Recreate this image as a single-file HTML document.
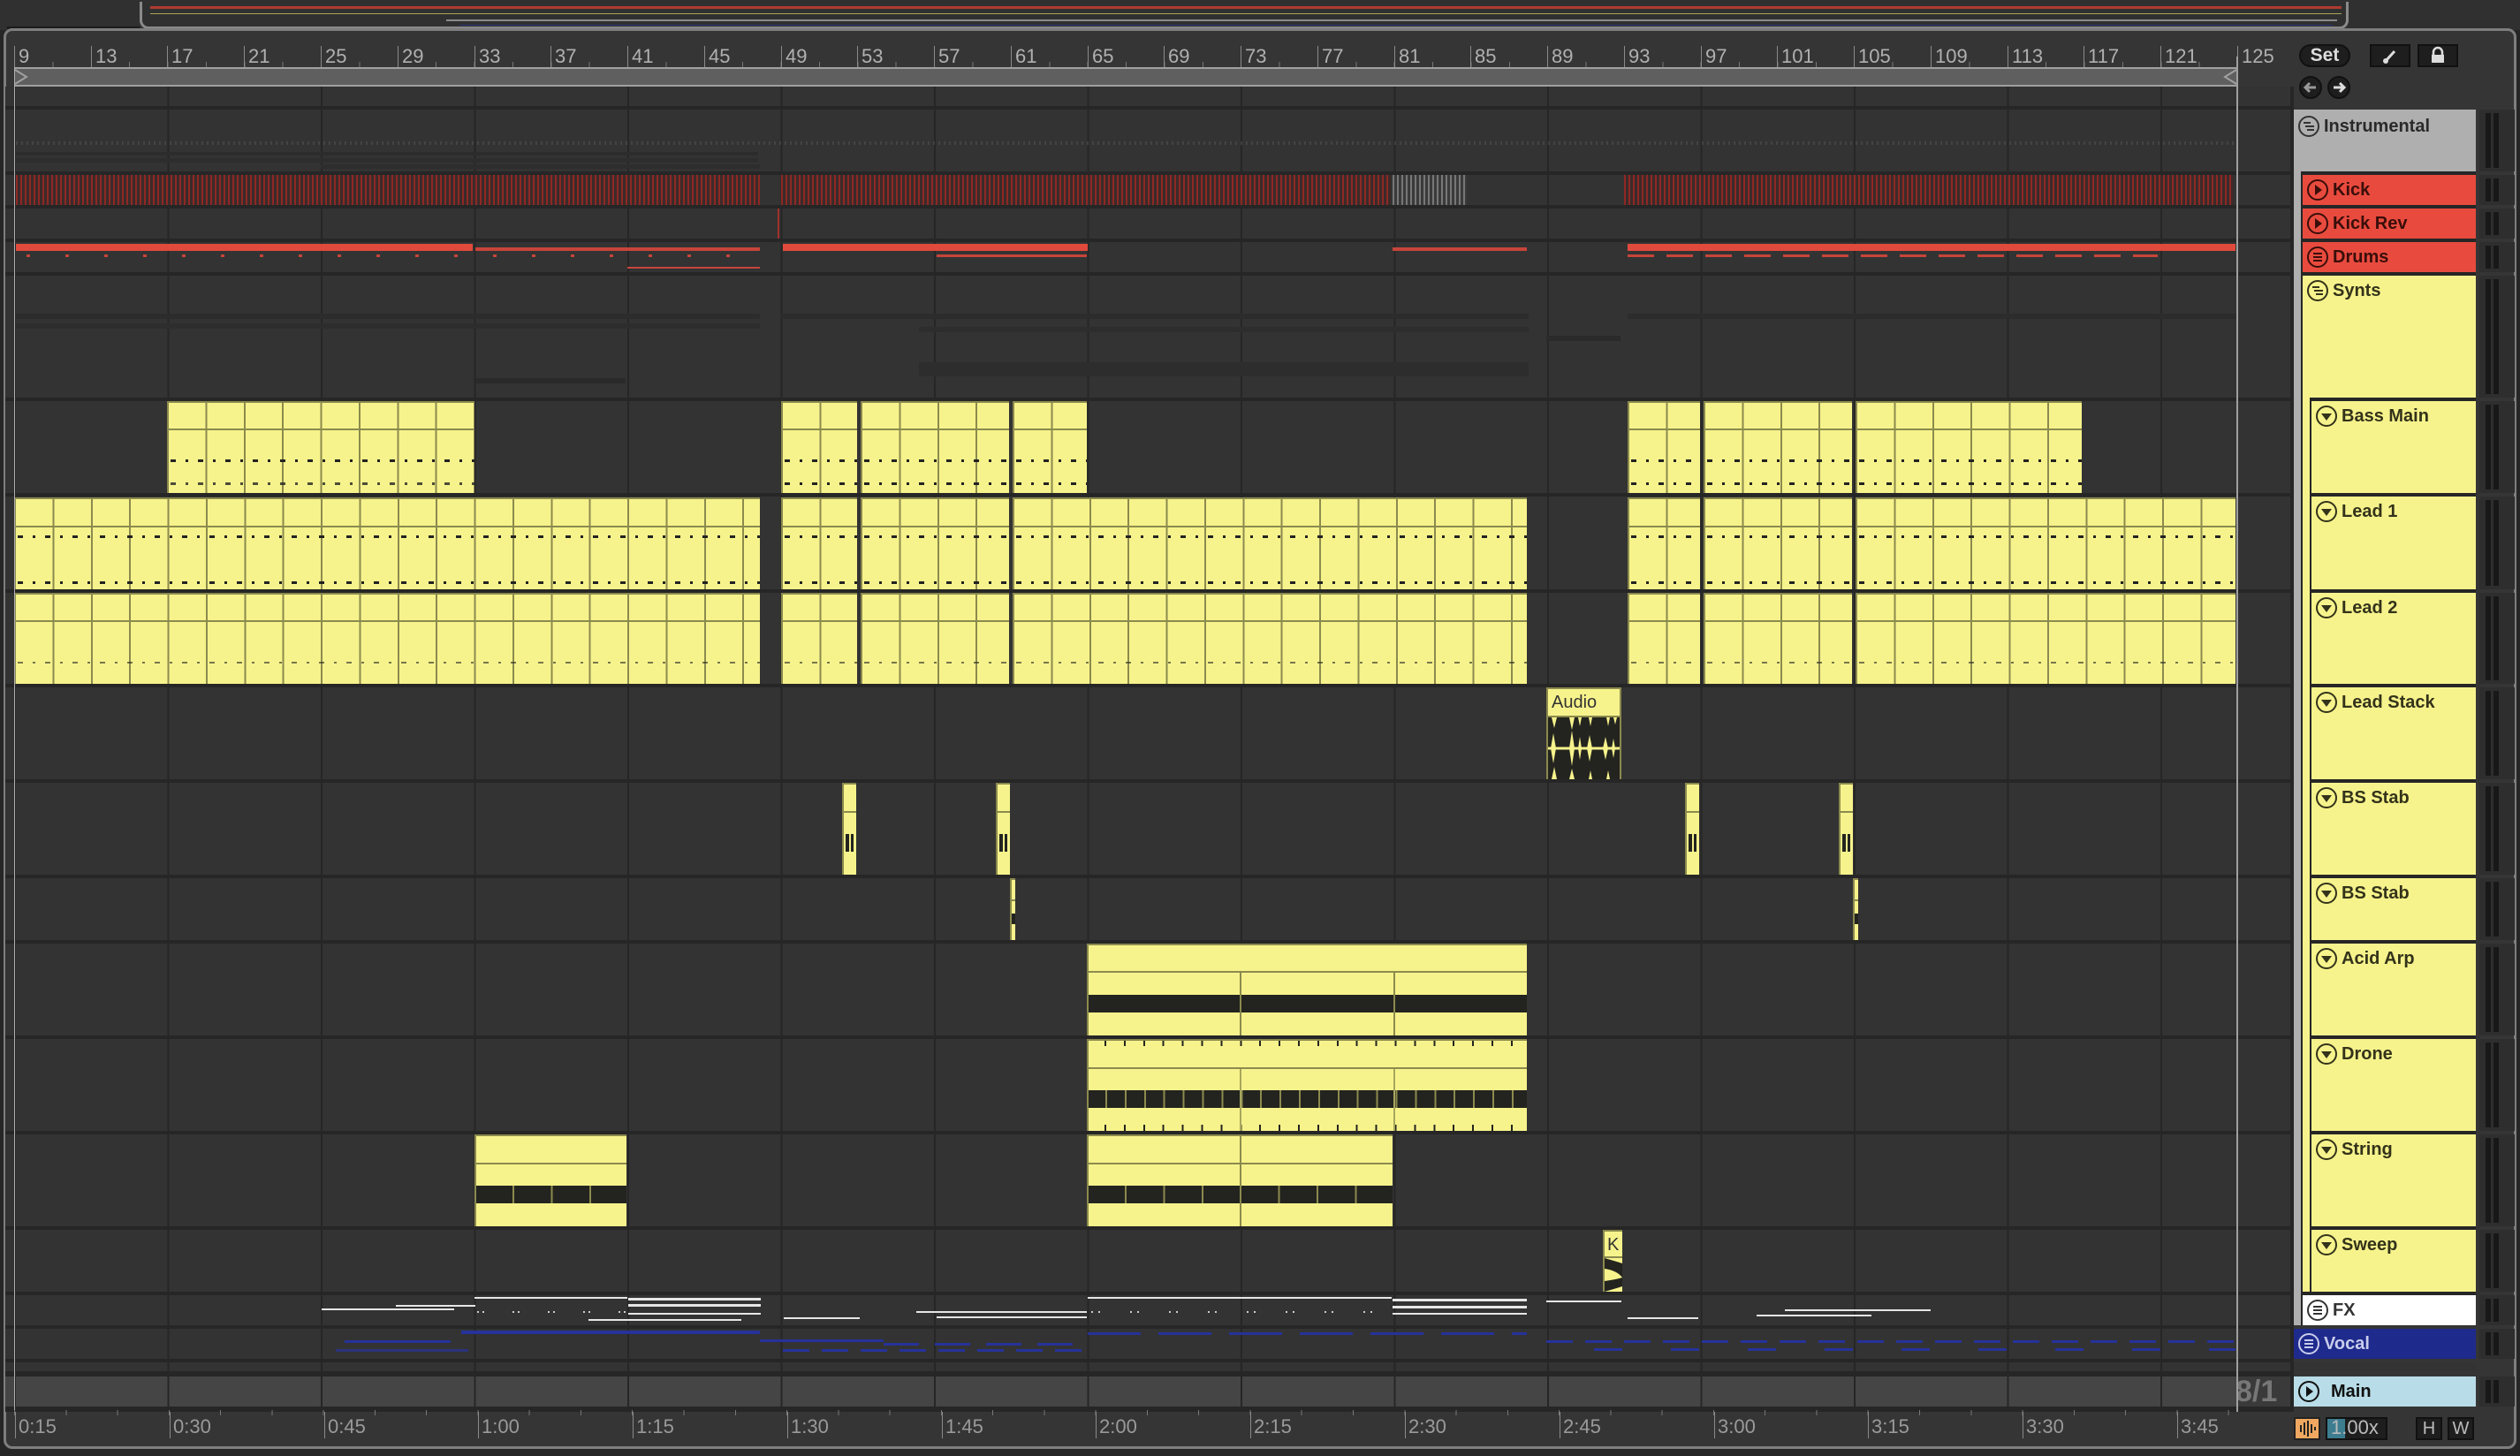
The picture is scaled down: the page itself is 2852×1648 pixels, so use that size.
<!DOCTYPE html>
<html><head><meta charset="utf-8"><style>
*{margin:0;padding:0;box-sizing:border-box}
body{width:2852px;height:1648px;background:#262626;position:relative;overflow:hidden;font-family:"Liberation Sans",sans-serif}
div{position:absolute}
.row{left:6px;width:2586px;background-color:#333;background-image:repeating-linear-gradient(90deg,#262626 0 2px,transparent 2px 173.5px);background-position:10px 0}
.c{background:#f7f38c;box-shadow:inset 2px 0 #8b8a4e,inset 0 2px #8b8a4e}
.vl{background-image:repeating-linear-gradient(90deg,#8b8a4e 0 2px,transparent 2px 43.38px)}
.hl{left:0;right:0;height:2px;background:#8b8a4e}
.db{left:2px;right:0;background:#23241f}
.dots{left:4px;right:0;height:3px;background-image:repeating-linear-gradient(90deg,#222 0 6px,transparent 6px 17px,#222 17px 20px,transparent 20px 31px)}
.rn{top:52px;font:22px "Liberation Sans Narrow","Liberation Sans",sans-serif;color:#b0b0b0;border-left:1px solid #8a8a8a;padding-left:4px;height:24px;line-height:24px}
.tl{top:1598px;font:22px "Liberation Sans Narrow","Liberation Sans",sans-serif;color:#9a9a9a;border-left:1px solid #8a8a8a;padding-left:3px;height:30px;line-height:34px}
.th{font:bold 20px "Liberation Sans",sans-serif;color:#222;}
.th svg{position:absolute;left:4px;top:6px}
.th span{position:absolute;left:34px;top:8px;white-space:nowrap}
.m{left:2806px;width:40px;background:#2e2e2e}
.m:before,.m:after{content:"";position:absolute;top:4px;bottom:4px;width:6px;background:#181818}
.m:before{left:7px}.m:after{left:16px}
.wl{height:2px;background:#e6e6e6}
.bl{height:3px;background:#26329a}
.btn{background:#1e1e1e;border:2px solid #111}
</style></head><body>

<div style="left:0;top:0;width:2852px;height:34px;background:#303030"></div>
<div style="left:158px;top:2px;width:2500px;height:31px;border:3px solid #8a8a8a;border-top:none;border-radius:0 0 10px 10px"></div>
<div style="left:170px;top:7px;width:2480px;height:3px;background:#b03a32"></div>
<div style="left:170px;top:15px;width:2480px;height:1px;background:#a8a45a"></div>
<div style="left:505px;top:22px;width:2140px;height:2px;background:#8c8c8c"></div>
<div style="left:520px;top:28px;width:2120px;height:1px;background:#2b3378"></div>
<div style="left:8px;top:30px;width:150px;height:3px;background:#1c1c1c"></div>

<div style="left:4px;top:32px;width:2844px;height:1608px;background:#353535;border:3px solid #7e7e7e;border-radius:10px"></div>

<div style="left:16px;top:70px;width:2516px;height:6px;background-image:repeating-linear-gradient(90deg,#777 0 1px,transparent 1px 43.38px)"></div>
<div class="rn" style="left:16px">9</div>
<div class="rn" style="left:103px">13</div>
<div class="rn" style="left:189px">17</div>
<div class="rn" style="left:276px">21</div>
<div class="rn" style="left:363px">25</div>
<div class="rn" style="left:450px">29</div>
<div class="rn" style="left:537px">33</div>
<div class="rn" style="left:623px">37</div>
<div class="rn" style="left:710px">41</div>
<div class="rn" style="left:797px">45</div>
<div class="rn" style="left:884px">49</div>
<div class="rn" style="left:970px">53</div>
<div class="rn" style="left:1057px">57</div>
<div class="rn" style="left:1144px">61</div>
<div class="rn" style="left:1231px">65</div>
<div class="rn" style="left:1317px">69</div>
<div class="rn" style="left:1404px">73</div>
<div class="rn" style="left:1491px">77</div>
<div class="rn" style="left:1578px">81</div>
<div class="rn" style="left:1664px">85</div>
<div class="rn" style="left:1751px">89</div>
<div class="rn" style="left:1838px">93</div>
<div class="rn" style="left:1925px">97</div>
<div class="rn" style="left:2011px">101</div>
<div class="rn" style="left:2098px">105</div>
<div class="rn" style="left:2185px">109</div>
<div class="rn" style="left:2272px">113</div>
<div class="rn" style="left:2358px">117</div>
<div class="rn" style="left:2445px">121</div>
<div class="rn" style="left:2532px">125</div>
<div style="left:16px;top:76px;width:2516px;height:22px;background:#5f5f5f;border-top:2px solid #a0a0a0;border-bottom:2px solid #a0a0a0"></div>
<svg style="position:absolute;left:16px;top:78px" width="20" height="18"><path d="M1 1 L14 9 L1 17" fill="none" stroke="#a0a0a0" stroke-width="2"/></svg>
<svg style="position:absolute;left:2512px;top:78px" width="20" height="18"><path d="M19 1 L6 9 L19 17" fill="none" stroke="#a0a0a0" stroke-width="2"/></svg>

<div style="left:6px;top:98px;width:2590px;height:1500px;background:#262626"></div>
<div class="row" style="top:98px;height:22px"></div>
<div class="row" style="top:124px;height:70px"></div>
<div class="row" style="top:198px;height:34px"></div>
<div class="row" style="top:236px;height:34px"></div>
<div class="row" style="top:274px;height:34px"></div>
<div class="row" style="top:312px;height:138px"></div>
<div class="row" style="top:454px;height:104px"></div>
<div class="row" style="top:562px;height:105px"></div>
<div class="row" style="top:671px;height:103px"></div>
<div class="row" style="top:778px;height:104px"></div>
<div class="row" style="top:886px;height:104px"></div>
<div class="row" style="top:994px;height:70px"></div>
<div class="row" style="top:1068px;height:104px"></div>
<div class="row" style="top:1176px;height:104px"></div>
<div class="row" style="top:1284px;height:104px"></div>
<div class="row" style="top:1392px;height:70px"></div>
<div class="row" style="top:1466px;height:34px"></div>
<div class="row" style="top:1504px;height:34px"></div>
<div class="row" style="top:1542px;height:10px"></div>
<div class="row" style="top:1558px;height:34px;background-color:#454545"></div>
<div style="left:2532px;top:1558px;width:60px;height:34px;background:#3a3a3a"></div>
<div style="left:2530px;top:1556px;font:bold 34px 'Liberation Sans',sans-serif;color:#777">8/1</div>

<div style="left:18px;top:160px;width:2510px;height:4px;background-image:repeating-linear-gradient(90deg,#555 0 2px,transparent 2px 6px);opacity:.5"></div>
<div style="left:18px;top:172px;width:840px;height:4px;background:#2c2c2c"></div>
<div style="left:18px;top:179px;width:840px;height:5px;background:#2d2d2d"></div>
<div style="left:363px;top:186px;width:497px;height:5px;background:#2d2d2d"></div>

<div style="left:18px;top:198px;width:842px;height:34px;background:repeating-linear-gradient(90deg,#8e2824 0 2px,#3b2b2a 2px 5px)"></div>
<div style="left:884px;top:198px;width:690px;height:34px;background:repeating-linear-gradient(90deg,#8e2824 0 2px,#3b2b2a 2px 5px)"></div>
<div style="left:1576px;top:198px;width:84px;height:34px;background:repeating-linear-gradient(90deg,#777 0 2px,#3a3a3a 2px 5px)"></div>
<div style="left:1838px;top:198px;width:690px;height:34px;background:repeating-linear-gradient(90deg,#8e2824 0 2px,#3b2b2a 2px 5px)"></div>
<div style="left:880px;top:236px;width:2px;height:34px;background:#a0302a"></div>

<div style="left:18px;top:276px;width:517px;height:8px;background:#e04a3c"></div>
<div style="left:538px;top:280px;width:322px;height:4px;background:#c8443a"></div>
<div style="left:710px;top:302px;width:150px;height:2px;background:#c8443a"></div>
<div style="left:886px;top:276px;width:345px;height:8px;background:#e04a3c"></div>
<div style="left:1060px;top:288px;width:170px;height:3px;background:#c8443a"></div>
<div style="left:1576px;top:280px;width:152px;height:4px;background:#c8443a"></div>
<div style="left:1842px;top:276px;width:688px;height:8px;background:#e04a3c"></div>
<div style="left:1842px;top:288px;width:600px;height:3px;background-image:repeating-linear-gradient(90deg,#c8443a 0 30px,transparent 30px 44px)"></div>
<div style="left:30px;top:288px;width:830px;height:3px;background-image:repeating-linear-gradient(90deg,#c8443a 0 4px,transparent 4px 44px)"></div>

<div style="left:18px;top:355px;width:842px;height:6px;background:#2c2c2c"></div>
<div style="left:18px;top:366px;width:842px;height:6px;background:#2d2d2d"></div>
<div style="left:884px;top:355px;width:846px;height:6px;background:#2c2c2c"></div>
<div style="left:1040px;top:370px;width:690px;height:6px;background:#2d2d2d"></div>
<div style="left:1040px;top:410px;width:690px;height:16px;background:#2d2d2d"></div>
<div style="left:538px;top:428px;width:170px;height:6px;background:#2a2a2a"></div>
<div style="left:1750px;top:380px;width:84px;height:6px;background:#2a2a2a"></div>
<div style="left:1842px;top:355px;width:690px;height:6px;background:#2c2c2c"></div>

<div class="c vl" style="left:189px;top:454px;width:348px;height:104px"><div class="hl" style="top:31px"></div><div class="dots" style="top:66px"></div><div class="dots" style="top:92px;opacity:.8"></div></div>
<div class="c vl" style="left:884px;top:454px;width:86px;height:104px"><div class="hl" style="top:31px"></div><div class="dots" style="top:66px"></div><div class="dots" style="top:92px"></div></div>
<div class="c vl" style="left:974px;top:454px;width:168px;height:104px"><div class="hl" style="top:31px"></div><div class="dots" style="top:66px"></div><div class="dots" style="top:92px"></div></div>
<div class="c vl" style="left:1146px;top:454px;width:84px;height:104px"><div class="hl" style="top:31px"></div><div class="dots" style="top:66px"></div><div class="dots" style="top:92px"></div></div>
<div class="c vl" style="left:1842px;top:454px;width:82px;height:104px"><div class="hl" style="top:31px"></div><div class="dots" style="top:66px"></div><div class="dots" style="top:92px"></div></div>
<div class="c vl" style="left:1928px;top:454px;width:168px;height:104px"><div class="hl" style="top:31px"></div><div class="dots" style="top:66px"></div><div class="dots" style="top:92px"></div></div>
<div class="c vl" style="left:2100px;top:454px;width:256px;height:104px"><div class="hl" style="top:31px"></div><div class="dots" style="top:66px"></div><div class="dots" style="top:92px"></div></div>

<div class="c vl" style="left:16px;top:563px;width:844px;height:104px"><div class="hl" style="top:32px"></div><div class="dots" style="top:43px"></div><div class="dots" style="top:95px"></div></div>
<div class="c vl" style="left:884px;top:563px;width:86px;height:104px"><div class="hl" style="top:32px"></div><div class="dots" style="top:43px"></div><div class="dots" style="top:95px"></div></div>
<div class="c vl" style="left:974px;top:563px;width:168px;height:104px"><div class="hl" style="top:32px"></div><div class="dots" style="top:43px"></div><div class="dots" style="top:95px"></div></div>
<div class="c vl" style="left:1146px;top:563px;width:582px;height:104px"><div class="hl" style="top:32px"></div><div class="dots" style="top:43px"></div><div class="dots" style="top:95px"></div></div>
<div class="c vl" style="left:1842px;top:563px;width:82px;height:104px"><div class="hl" style="top:32px"></div><div class="dots" style="top:43px"></div><div class="dots" style="top:95px"></div></div>
<div class="c vl" style="left:1928px;top:563px;width:168px;height:104px"><div class="hl" style="top:32px"></div><div class="dots" style="top:43px"></div><div class="dots" style="top:95px"></div></div>
<div class="c vl" style="left:2100px;top:563px;width:430px;height:104px"><div class="hl" style="top:32px"></div><div class="dots" style="top:43px"></div><div class="dots" style="top:95px"></div></div>

<div class="c vl" style="left:16px;top:671px;width:844px;height:103px"><div class="hl" style="top:31px"></div><div class="dots" style="top:78px;height:2px;opacity:.6"></div></div>
<div class="c vl" style="left:884px;top:671px;width:86px;height:103px"><div class="hl" style="top:31px"></div><div class="dots" style="top:78px;height:2px;opacity:.6"></div></div>
<div class="c vl" style="left:974px;top:671px;width:168px;height:103px"><div class="hl" style="top:31px"></div><div class="dots" style="top:78px;height:2px;opacity:.6"></div></div>
<div class="c vl" style="left:1146px;top:671px;width:582px;height:103px"><div class="hl" style="top:31px"></div><div class="dots" style="top:78px;height:2px;opacity:.6"></div></div>
<div class="c vl" style="left:1842px;top:671px;width:82px;height:103px"><div class="hl" style="top:31px"></div><div class="dots" style="top:78px;height:2px;opacity:.6"></div></div>
<div class="c vl" style="left:1928px;top:671px;width:168px;height:103px"><div class="hl" style="top:31px"></div><div class="dots" style="top:78px;height:2px;opacity:.6"></div></div>
<div class="c vl" style="left:2100px;top:671px;width:430px;height:103px"><div class="hl" style="top:31px"></div><div class="dots" style="top:78px;height:2px;opacity:.6"></div></div>

<div class="c" style="left:1750px;top:778px;width:85px;height:104px;background:#23241f;box-shadow:inset 2px 0 #8b8a4e,inset -2px 0 #8b8a4e">
 <div style="left:0;top:0;width:85px;height:34px;background:#f7f38c;border:2px solid #8b8a4e;font:20px 'Liberation Sans',sans-serif;color:#333;padding:4px 0 0 4px">Audio</div>
 <svg style="position:absolute;left:2px;top:34px" width="81" height="70"><path d="M0 35 H81" stroke="#f7f38c" stroke-width="3"/><path d="M4 0 L7 12 L10 0 Z M24 0 L27 14 L30 0 Z M34 0 L36 10 L38 0Z M46 0 L48 10 L50 0Z M66 0 L68 10 L70 0Z M74 0 L76 8 L78 0Z M3 35 L6 18 L9 35 L6 52Z M24 35 L27 15 L30 35 L27 55Z M34 35 L36 22 L38 35 L36 48Z M44 35 L47 20 L50 35 L47 50Z M62 35 L65 22 L68 35 L65 48Z M72 35 L74 24 L76 35 L74 46Z M4 70 L7 56 L10 70Z M24 70 L27 58 L30 70Z M46 70 L48 60 L50 70Z M66 70 L68 60 L70 70Z" fill="#f7f38c"/></svg>
</div>

<div class="c" style="left:953px;top:886px;width:16px;height:104px"><div class="hl" style="top:32px"></div><div style="left:4px;top:58px;width:4px;height:20px;background:#23241f"></div><div style="left:10px;top:58px;width:3px;height:20px;background:#23241f"></div></div>
<div class="c" style="left:1127px;top:886px;width:16px;height:104px"><div class="hl" style="top:32px"></div><div style="left:4px;top:58px;width:4px;height:20px;background:#23241f"></div><div style="left:10px;top:58px;width:3px;height:20px;background:#23241f"></div></div>
<div class="c" style="left:1907px;top:886px;width:16px;height:104px"><div class="hl" style="top:32px"></div><div style="left:4px;top:58px;width:4px;height:20px;background:#23241f"></div><div style="left:10px;top:58px;width:3px;height:20px;background:#23241f"></div></div>
<div class="c" style="left:2081px;top:886px;width:16px;height:104px"><div class="hl" style="top:32px"></div><div style="left:4px;top:58px;width:4px;height:20px;background:#23241f"></div><div style="left:10px;top:58px;width:3px;height:20px;background:#23241f"></div></div>
<div class="c" style="left:1143px;top:994px;width:6px;height:70px"><div class="hl" style="top:24px"></div><div style="left:2px;top:40px;width:4px;height:12px;background:#23241f"></div></div>
<div class="c" style="left:2097px;top:994px;width:6px;height:70px"><div class="hl" style="top:24px"></div><div style="left:2px;top:40px;width:4px;height:12px;background:#23241f"></div></div>

<div class="c" style="left:1230px;top:1068px;width:498px;height:104px"><div class="hl" style="top:31px"></div><div class="db" style="top:58px;height:20px"></div><div style="left:173px;top:33px;width:2px;height:71px;background:#8b8a4e"></div><div style="left:347px;top:33px;width:2px;height:71px;background:#8b8a4e"></div></div>
<div class="c" style="left:1230px;top:1176px;width:498px;height:104px"><div style="left:20px;right:0;top:2px;height:6px;background-image:repeating-linear-gradient(90deg,#23241f 0 2px,transparent 2px 21.9px)"></div><div class="hl" style="top:32px"></div><div class="db" style="top:58px;height:20px;background-image:repeating-linear-gradient(90deg,transparent 0 19px,#8b8a4e 19px 21px,transparent 21px 21.9px);background-color:#23241f"></div><div style="left:20px;right:0;top:97px;height:7px;background-image:repeating-linear-gradient(90deg,#23241f 0 2px,transparent 2px 21.9px)"></div><div style="left:173px;top:34px;width:2px;height:70px;background:#a8a65e"></div><div style="left:347px;top:34px;width:2px;height:70px;background:#a8a65e"></div></div>
<div class="c" style="left:537px;top:1284px;width:172px;height:104px"><div class="hl" style="top:32px"></div><div class="db" style="top:58px;height:20px;background-image:repeating-linear-gradient(90deg,transparent 0 41px,#8b8a4e 41px 43px,transparent 43px 43.4px);background-color:#23241f"></div></div>
<div class="c" style="left:1230px;top:1284px;width:346px;height:104px"><div class="hl" style="top:32px"></div><div class="db" style="top:58px;height:20px;background-image:repeating-linear-gradient(90deg,transparent 0 41px,#8b8a4e 41px 43px,transparent 43px 43.4px);background-color:#23241f"></div><div style="left:173px;top:0;width:2px;height:104px;background:#8b8a4e"></div></div>
<div class="c" style="left:1814px;top:1392px;width:22px;height:70px;background:#23241f;overflow:hidden">
 <div style="left:0;top:0;width:22px;height:32px;background:#f7f38c;border-left:2px solid #8b8a4e;border-top:2px solid #8b8a4e;border-bottom:2px solid #8b8a4e;font:20px 'Liberation Sans',sans-serif;color:#333;padding:4px 0 0 3px">K</div>
 <svg style="position:absolute;left:2px;top:32px" width="20" height="38"><path d="M0 0 Q14 4 20 6 V0Z M0 12 Q14 14 20 22 Q14 24 0 26Z M0 38 Q14 34 20 32 V38Z" fill="#f7f38c"/></svg>
</div>

<div class="wl" style="left:364px;top:1481px;width:150px"></div>
<div class="wl" style="left:448px;top:1477px;width:90px"></div>
<div class="wl" style="left:537px;top:1468px;width:173px"></div>
<div style="left:540px;top:1484px;width:170px;height:2px;background-image:repeating-linear-gradient(90deg,#ccc 0 2px,transparent 2px 6px,#ccc 6px 8px,transparent 8px 40px)"></div>
<div class="wl" style="left:711px;top:1469px;width:150px;height:3px"></div>
<div class="wl" style="left:711px;top:1476px;width:150px;height:3px"></div>
<div class="wl" style="left:711px;top:1486px;width:150px"></div>
<div class="wl" style="left:666px;top:1493px;width:173px"></div>
<div class="wl" style="left:887px;top:1491px;width:86px"></div>
<div class="wl" style="left:1037px;top:1484px;width:193px"></div>
<div class="wl" style="left:1060px;top:1490px;width:170px"></div>
<div class="wl" style="left:1231px;top:1468px;width:344px"></div>
<div style="left:1235px;top:1484px;width:340px;height:2px;background-image:repeating-linear-gradient(90deg,#ccc 0 2px,transparent 2px 8px,#ccc 8px 10px,transparent 10px 44px)"></div>
<div class="wl" style="left:1576px;top:1470px;width:152px;height:3px"></div>
<div class="wl" style="left:1576px;top:1478px;width:152px;height:3px"></div>
<div class="wl" style="left:1576px;top:1486px;width:152px"></div>
<div class="wl" style="left:1750px;top:1472px;width:85px"></div>
<div class="wl" style="left:1842px;top:1491px;width:80px"></div>
<div class="wl" style="left:1988px;top:1488px;width:130px"></div>
<div class="wl" style="left:2020px;top:1482px;width:165px"></div>

<div class="bl" style="left:522px;top:1506px;width:338px;height:4px"></div>
<div class="bl" style="left:390px;top:1517px;width:120px"></div>
<div class="bl" style="left:380px;top:1527px;width:150px;opacity:.7"></div>
<div class="bl" style="left:860px;top:1516px;width:140px"></div>
<div class="bl" style="left:886px;top:1527px;width:340px;background-image:repeating-linear-gradient(90deg,#26329a 0 30px,transparent 30px 44px);background-color:transparent"></div>
<div class="bl" style="left:1000px;top:1520px;width:230px;background-image:repeating-linear-gradient(90deg,#26329a 0 40px,transparent 40px 58px);background-color:transparent"></div>
<div class="bl" style="left:1231px;top:1508px;width:497px;background-image:repeating-linear-gradient(90deg,#26329a 0 60px,transparent 60px 80px);background-color:transparent"></div>
<div class="bl" style="left:1750px;top:1517px;width:780px;background-image:repeating-linear-gradient(90deg,#26329a 0 30px,transparent 30px 44px);background-color:transparent"></div>
<div class="bl" style="left:1780px;top:1526px;width:750px;background-image:repeating-linear-gradient(90deg,transparent 0 24px,#26329a 24px 56px,transparent 56px 87px);background-color:transparent"></div>

<div style="left:16px;top:76px;width:1px;height:1522px;background:#b0b0b0"></div>
<div style="left:2531px;top:64px;width:2px;height:1534px;background:#a0a0a0"></div>

<div style="left:16px;top:1596px;width:2516px;height:6px;background-image:repeating-linear-gradient(90deg,#777 0 1px,transparent 1px 58.27px)"></div>
<div class="tl" style="left:17px">0:15</div>
<div class="tl" style="left:192px">0:30</div>
<div class="tl" style="left:367px">0:45</div>
<div class="tl" style="left:541px">1:00</div>
<div class="tl" style="left:716px">1:15</div>
<div class="tl" style="left:891px">1:30</div>
<div class="tl" style="left:1066px">1:45</div>
<div class="tl" style="left:1240px">2:00</div>
<div class="tl" style="left:1415px">2:15</div>
<div class="tl" style="left:1590px">2:30</div>
<div class="tl" style="left:1765px">2:45</div>
<div class="tl" style="left:1940px">3:00</div>
<div class="tl" style="left:2114px">3:15</div>
<div class="tl" style="left:2289px">3:30</div>
<div class="tl" style="left:2464px">3:45</div>

<div style="left:2602px;top:50px;width:58px;height:26px;background:#1e1e1e;border:2px solid #111;border-radius:13px;font:bold 21px 'Liberation Sans',sans-serif;color:#ddd;text-align:center;line-height:22px">Set</div>
<div class="btn" style="left:2682px;top:50px;width:46px;height:26px"><svg width="42" height="22"><path d="M16 17 L26 6" stroke="#ddd" stroke-width="3"/><circle cx="16" cy="17" r="3" fill="#ddd"/></svg></div>
<div class="btn" style="left:2736px;top:50px;width:46px;height:26px"><svg width="42" height="22"><path d="M16 10 V7 a5 5 0 0 1 10 0 V10" fill="none" stroke="#ddd" stroke-width="2.5"/><rect x="14" y="10" width="14" height="9" fill="#ddd"/></svg></div>
<svg style="position:absolute;left:2602px;top:86px" width="80" height="28"><circle cx="13" cy="13" r="12" fill="#1e1e1e" stroke="#111" stroke-width="2"/><path d="M19 13 H8 M12 8 L7 13 L12 18" stroke="#999" stroke-width="3" fill="none"/><circle cx="45" cy="13" r="12" fill="#1e1e1e" stroke="#111" stroke-width="2"/><path d="M39 13 H50 M46 8 L51 13 L46 18" stroke="#ddd" stroke-width="3" fill="none"/></svg>

<div style="left:2596px;top:124px;width:206px;height:1376px;background:#afafaf"></div>
<div style="left:2604px;top:194px;width:198px;height:1306px;background:#262626"></div>
<div style="left:2606px;top:198px;width:196px;height:34px;background:#e84b3e"></div>
<div style="left:2606px;top:236px;width:196px;height:34px;background:#e84b3e"></div>
<div style="left:2606px;top:274px;width:196px;height:34px;background:#e84b3e"></div>
<div style="left:2606px;top:312px;width:196px;height:1150px;background:#f6f38c"></div>
<div style="left:2614px;top:450px;width:188px;height:1012px;background:#262626"></div>
<div style="left:2616px;top:454px;width:186px;height:104px;background:#f6f38c"></div>
<div style="left:2616px;top:562px;width:186px;height:105px;background:#f6f38c"></div>
<div style="left:2616px;top:671px;width:186px;height:103px;background:#f6f38c"></div>
<div style="left:2616px;top:778px;width:186px;height:104px;background:#f6f38c"></div>
<div style="left:2616px;top:886px;width:186px;height:104px;background:#f6f38c"></div>
<div style="left:2616px;top:994px;width:186px;height:70px;background:#f6f38c"></div>
<div style="left:2616px;top:1068px;width:186px;height:104px;background:#f6f38c"></div>
<div style="left:2616px;top:1176px;width:186px;height:104px;background:#f6f38c"></div>
<div style="left:2616px;top:1284px;width:186px;height:104px;background:#f6f38c"></div>
<div style="left:2616px;top:1392px;width:186px;height:70px;background:#f6f38c"></div>
<div style="left:2606px;top:1466px;width:196px;height:34px;background:#ffffff"></div>
<div style="left:2596px;top:1504px;width:206px;height:34px;background:#1f2a8d"></div>
<div style="left:2596px;top:1542px;width:206px;height:10px;background:#333"></div>
<div style="left:2596px;top:1558px;width:206px;height:34px;background:#b9dde8"></div>

<div class="th" style="left:2596px;top:124px;color:#2a2a2a"><svg width="26" height="26"><circle cx="13" cy="13" r="11" fill="none" stroke="#333" stroke-width="2"/><path d="M7 9H15M9 13H19M11 17H19" stroke="#333" stroke-width="2"/></svg><span>Instrumental</span></div>
<div class="th" style="left:2606px;top:198px;color:#3a0e0a"><svg width="26" height="26" style="top:4px"><circle cx="13" cy="13" r="11" fill="none" stroke="#3a0e0a" stroke-width="2"/><path d="M10 7L18 13L10 19Z" fill="#3a0e0a"/></svg><span style="top:6px">Kick</span></div>
<div class="th" style="left:2606px;top:236px;color:#3a0e0a"><svg width="26" height="26" style="top:4px"><circle cx="13" cy="13" r="11" fill="none" stroke="#3a0e0a" stroke-width="2"/><path d="M10 7L18 13L10 19Z" fill="#3a0e0a"/></svg><span style="top:6px">Kick Rev</span></div>
<div class="th" style="left:2606px;top:274px;color:#3a0e0a"><svg width="26" height="26" style="top:4px"><circle cx="13" cy="13" r="11" fill="none" stroke="#3a0e0a" stroke-width="2"/><path d="M8 9H18M8 13H18M8 17H18" stroke="#3a0e0a" stroke-width="2"/></svg><span style="top:6px">Drums</span></div>
<div class="th" style="left:2606px;top:312px;color:#33321a"><svg width="26" height="26" style="top:4px"><circle cx="13" cy="13" r="11" fill="none" stroke="#33321a" stroke-width="2"/><path d="M7 9H15M9 13H19M11 17H19" stroke="#33321a" stroke-width="2"/></svg><span style="top:6px">Synts</span></div>

<div class="th" style="left:2616px;top:454px;color:#33321a"><svg width="26" height="26" style="top:4px"><circle cx="13" cy="13" r="11" fill="none" stroke="#33321a" stroke-width="2"/><path d="M7 10H19L13 18Z" fill="#33321a"/></svg><span style="top:6px">Bass Main</span></div>
<div class="th" style="left:2616px;top:562px;color:#33321a"><svg width="26" height="26" style="top:4px"><circle cx="13" cy="13" r="11" fill="none" stroke="#33321a" stroke-width="2"/><path d="M7 10H19L13 18Z" fill="#33321a"/></svg><span style="top:6px">Lead 1</span></div>
<div class="th" style="left:2616px;top:671px;color:#33321a"><svg width="26" height="26" style="top:4px"><circle cx="13" cy="13" r="11" fill="none" stroke="#33321a" stroke-width="2"/><path d="M7 10H19L13 18Z" fill="#33321a"/></svg><span style="top:6px">Lead 2</span></div>
<div class="th" style="left:2616px;top:778px;color:#33321a"><svg width="26" height="26" style="top:4px"><circle cx="13" cy="13" r="11" fill="none" stroke="#33321a" stroke-width="2"/><path d="M7 10H19L13 18Z" fill="#33321a"/></svg><span style="top:6px">Lead Stack</span></div>
<div class="th" style="left:2616px;top:886px;color:#33321a"><svg width="26" height="26" style="top:4px"><circle cx="13" cy="13" r="11" fill="none" stroke="#33321a" stroke-width="2"/><path d="M7 10H19L13 18Z" fill="#33321a"/></svg><span style="top:6px">BS Stab</span></div>
<div class="th" style="left:2616px;top:994px;color:#33321a"><svg width="26" height="26" style="top:4px"><circle cx="13" cy="13" r="11" fill="none" stroke="#33321a" stroke-width="2"/><path d="M7 10H19L13 18Z" fill="#33321a"/></svg><span style="top:6px">BS Stab</span></div>
<div class="th" style="left:2616px;top:1068px;color:#33321a"><svg width="26" height="26" style="top:4px"><circle cx="13" cy="13" r="11" fill="none" stroke="#33321a" stroke-width="2"/><path d="M7 10H19L13 18Z" fill="#33321a"/></svg><span style="top:6px">Acid Arp</span></div>
<div class="th" style="left:2616px;top:1176px;color:#33321a"><svg width="26" height="26" style="top:4px"><circle cx="13" cy="13" r="11" fill="none" stroke="#33321a" stroke-width="2"/><path d="M7 10H19L13 18Z" fill="#33321a"/></svg><span style="top:6px">Drone</span></div>
<div class="th" style="left:2616px;top:1284px;color:#33321a"><svg width="26" height="26" style="top:4px"><circle cx="13" cy="13" r="11" fill="none" stroke="#33321a" stroke-width="2"/><path d="M7 10H19L13 18Z" fill="#33321a"/></svg><span style="top:6px">String</span></div>
<div class="th" style="left:2616px;top:1392px;color:#33321a"><svg width="26" height="26" style="top:4px"><circle cx="13" cy="13" r="11" fill="none" stroke="#33321a" stroke-width="2"/><path d="M7 10H19L13 18Z" fill="#33321a"/></svg><span style="top:6px">Sweep</span></div>
<div class="th" style="left:2606px;top:1466px;color:#333"><svg width="26" height="26" style="top:4px"><circle cx="13" cy="13" r="11" fill="none" stroke="#333" stroke-width="2"/><path d="M8 9H18M8 13H18M8 17H18" stroke="#333" stroke-width="2"/></svg><span style="top:6px">FX</span></div>
<div class="th" style="left:2596px;top:1504px;color:#c8cdec"><svg width="26" height="26" style="top:4px"><circle cx="13" cy="13" r="11" fill="none" stroke="#c8cdec" stroke-width="2"/><path d="M8 9H18M8 13H18M8 17H18" stroke="#c8cdec" stroke-width="2"/></svg><span style="top:6px">Vocal</span></div>
<div class="th" style="left:2596px;top:1558px;color:#111"><svg width="26" height="26" style="top:4px"><circle cx="13" cy="13" r="11" fill="none" stroke="#111" stroke-width="2"/><path d="M10 7L18 13L10 19Z" fill="#111"/></svg><span style="top:6px;left:42px">Main</span></div>

<div class="m" style="top:124px;height:70px"></div>
<div class="m" style="top:198px;height:34px"></div>
<div class="m" style="top:236px;height:34px"></div>
<div class="m" style="top:274px;height:34px"></div>
<div class="m" style="top:312px;height:138px"></div>
<div class="m" style="top:454px;height:104px"></div>
<div class="m" style="top:562px;height:105px"></div>
<div class="m" style="top:671px;height:103px"></div>
<div class="m" style="top:778px;height:104px"></div>
<div class="m" style="top:886px;height:104px"></div>
<div class="m" style="top:994px;height:70px"></div>
<div class="m" style="top:1068px;height:104px"></div>
<div class="m" style="top:1176px;height:104px"></div>
<div class="m" style="top:1284px;height:104px"></div>
<div class="m" style="top:1392px;height:70px"></div>
<div class="m" style="top:1466px;height:34px"></div>
<div class="m" style="top:1504px;height:34px"></div>
<div class="m" style="top:1558px;height:34px"></div>

<div style="left:2596px;top:1604px;width:30px;height:26px;background:#f0a860;border:2px solid #222"><svg width="26" height="22"><path d="M6 7V15M10 4V18M14 2V20M18 6V16M22 9V13" stroke="#222" stroke-width="2"/></svg></div>
<div style="left:2632px;top:1604px;width:70px;height:26px;background:#1e1e1e;border:2px solid #111"></div>
<div style="left:2634px;top:1606px;width:20px;height:22px;background:#3d7d90"></div>
<div style="left:2638px;top:1603px;font:22px 'Liberation Sans',sans-serif;color:#bbb">1.00x</div>
<div class="btn" style="left:2734px;top:1604px;width:30px;height:26px;font:20px 'Liberation Sans',sans-serif;color:#bbb;text-align:center;line-height:22px">H</div>
<div class="btn" style="left:2770px;top:1604px;width:30px;height:26px;font:20px 'Liberation Sans',sans-serif;color:#bbb;text-align:center;line-height:22px">W</div>
</body></html>
